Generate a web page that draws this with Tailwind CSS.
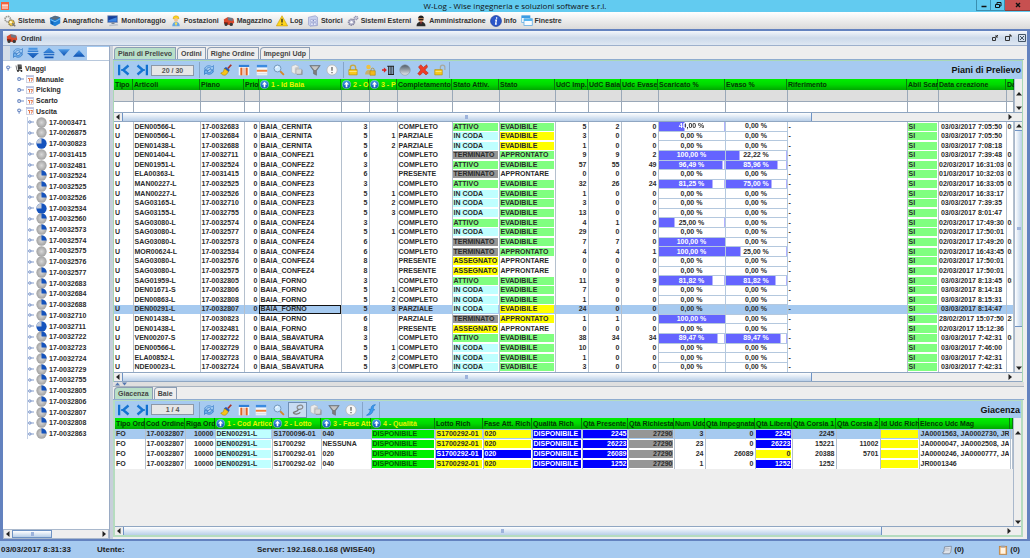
<!DOCTYPE html>
<html lang="it">
<head>
<meta charset="utf-8">
<title>W-Log</title>
<script src="https://cdn.jsdelivr.net/npm/@tailwindcss/browser@4"></script>
</head>
<body class="flex h-screen flex-col overflow-hidden bg-[#eeeeee] font-['Liberation_Sans',sans-serif] text-[7px] leading-[9px] font-bold text-[#2b2b2b]">

<svg class="absolute size-0" aria-hidden="true">
  <defs>
    <linearGradient id="gBlue" x1="0" y1="0" x2="0" y2="1"><stop offset="0" stop-color="#4a9ae8"/><stop offset="1" stop-color="#0b4fb0"/></linearGradient>
    <linearGradient id="gGrey" x1="0" y1="0" x2="0" y2="1"><stop offset="0" stop-color="#4d5a66"/><stop offset="1" stop-color="#e3e8ee"/></linearGradient>
    <radialGradient id="gBall"><stop offset="0" stop-color="#d8d8d8"/><stop offset="1" stop-color="#a2a2a2"/></radialGradient>
  </defs>
  <symbol id="gears" viewBox="0 0 16 16"><circle cx="5" cy="5.500" r="3.600" fill="none" stroke="#9a9a94" stroke-width="2.200" stroke-dasharray="2 .8"/><circle cx="10" cy="10.500" r="3.800" fill="#eec23c" stroke="#8a7c50" stroke-width="1.500" stroke-dasharray="2 .8"/><circle cx="9" cy="9.500" r="1.600" fill="#fff8d8"/><path d="M11 11l4 4" stroke="#777" stroke-width="2"/></symbol>
  <symbol id="books" viewBox="0 0 16 16"><path d="M1 4l7-3 7 2v8l-7 4-6-3z" fill="#1d7fd6"/><path d="M1 4l7-3 7 2-7 4z" fill="#5d6c7c"/><path d="M2 6l6 3 7-4" stroke="#8fd0ff" fill="none"/><path d="M3 8v4M5 9v4" stroke="#0b4c98"/></symbol>
  <symbol id="monitor" viewBox="0 0 16 16"><rect x="1" y="1" width="13" height="9" fill="#163f9a" stroke="#8a9bb8"/><path d="M2 7l11-4v6H2z" fill="#3d83e0"/><path d="M3 13l11-1 1 2-12 1z" fill="#b8c0cc"/><path d="M6 10h4v2H6z" fill="#7d8796"/></symbol>
  <symbol id="worker" viewBox="0 0 16 16"><path d="M4 5a4 4 0 018 0z" fill="#ffd21e" stroke="#c99700" stroke-width=".6"/><circle cx="8" cy="6.500" r="2.600" fill="#f3c48c"/><path d="M3 15c0-4 2-6 5-6s5 2 5 6z" fill="#62a7e6"/><path d="M6 10l2 5 2-5z" fill="#ffe14a"/></symbol>
  <symbol id="forklift" viewBox="0 0 16 16"><path d="M1 6l5-3 8 2 1 5-4 4-9-2z" fill="#d9482b"/><path d="M6 3l7 1v4l-6-1z" fill="#6d7684"/><path d="M1 9l6 1v3l-5-1z" fill="#8c2413"/><circle cx="4" cy="12.500" r="2" fill="#3a3a3a"/><circle cx="11" cy="12.500" r="2.200" fill="#3a3a3a"/></symbol>
  <symbol id="warn" viewBox="0 0 16 16"><path d="M8 1l7.500 13.500H.5z" fill="#ffd51c" stroke="#c79a00" stroke-width=".8"/><path d="M8 5v5M8 11.500v1.500" stroke="#222" stroke-width="1.700"/></symbol>
  <symbol id="cabinet" viewBox="0 0 16 16"><path d="M2 3l9-2 3 2v11l-10 1-2-2z" fill="#c7cfee" stroke="#8b94c4" stroke-width=".8"/><path d="M5 6h7v3H5zM5 10.500h7V14H5z" fill="#eef1ff" stroke="#8b94c4" stroke-width=".7"/><path d="M7.500 7.500h2M7.500 12h2" stroke="#4757a8"/></symbol>
  <symbol id="cogs" viewBox="0 0 16 16"><circle cx="6" cy="9.500" r="4" fill="#b6b6cf" stroke="#85859f" stroke-width="2" stroke-dasharray="1.800 1"/><circle cx="6" cy="9.500" r="1.600" fill="#fff"/><circle cx="12" cy="4" r="2.400" fill="#c6c6da" stroke="#8b8ba6" stroke-width="1.500" stroke-dasharray="1.400 .8"/></symbol>
  <symbol id="admin" viewBox="0 0 16 16"><path d="M2 15c0-4 2-6 6-6s6 2 6 6z" fill="#2a2a2a"/><circle cx="8" cy="5.500" r="3.500" fill="#b67a4e"/><path d="M4 5c0-6 8-6 8 0l-1-1H5z" fill="#222"/><path d="M5 5.500h6v1.300H5z" fill="#111"/><path d="M7 9h2l-1 4z" fill="#c33"/></symbol>
  <symbol id="info" viewBox="0 0 16 16"><circle cx="8" cy="8" r="7.300" fill="#2b56c9" stroke="#15348f" stroke-width=".8"/><path d="M8.800 3v2M7 7h1.500l-1 5H9" stroke="#fff" stroke-width="1.700" fill="none"/></symbol>
  <symbol id="windows" viewBox="0 0 16 16"><rect x="1" y="1" width="11" height="9" fill="#fff" stroke="#5aa9e2"/><path d="M1 1h11v3H1z" fill="#3d9be2"/><rect x="4" y="5" width="11" height="9" fill="#f7fbff" stroke="#5aa9e2"/><path d="M4 5h11v3H4z" fill="#56b4f0"/></symbol>
  <symbol id="refresh" viewBox="0 0 16 16"><path d="M2 7c1-5 7-6 10-3l2-2v5.500H8.500L10.500 5.500C8 3.500 5 5 4.500 7.500z" fill="#9cc8f2" stroke="#3a7fc8" stroke-width=".9"/><path d="M14 9c-1 5-7 6-10 3l-2 2V8.500h5.500L5.500 10.500c2.500 2 5.500.5 6-2z" fill="#6fb0ec" stroke="#2a72c0" stroke-width=".9"/></symbol>
  <symbol id="first" viewBox="0 0 16 16"><path d="M1.500 1v14" stroke="#0f6fce" stroke-width="3"/><path d="M14 2L7 8l7 6" fill="none" stroke="#1674d2" stroke-width="3.200"/><path d="M4 8h5" stroke="#1674d2" stroke-width="2"/></symbol>
  <symbol id="last" viewBox="0 0 16 16"><path d="M14.500 1v14" stroke="#0f6fce" stroke-width="3"/><path d="M2 2l7 6-7 6" fill="none" stroke="#1674d2" stroke-width="3.200"/><path d="M7 8h5" stroke="#1674d2" stroke-width="2"/></symbol>
  <symbol id="broom" viewBox="0 0 16 16"><path d="M15 1l-4.500 5" stroke="#a8352a" stroke-width="2.400"/><path d="M8 4l5 4-2 3-6-5z" fill="#2456b8"/><path d="M6 6l5 4c-1 3-3 5-5 5-2 0-4-1-5-3 3 0 4-3 5-6z" fill="#f6c31a" stroke="#a87c00" stroke-width=".7"/></symbol>
  <symbol id="cols" viewBox="0 0 16 16"><rect x="1" y="1" width="14" height="14" fill="#f4f6fa"/><path d="M1 1h14v3H1z" fill="#2f7fd8"/><path d="M4.500 5v10M11.500 5v10" stroke="#f0803c" stroke-width="3"/><path d="M4.500 5v10M11.500 5v10M8 5v10" stroke="#c8401c" stroke-width=".7"/></symbol>
  <symbol id="rows" viewBox="0 0 16 16"><rect x="1" y="1" width="14" height="14" fill="#f4f6fa"/><path d="M1 1h14v3.500H1z" fill="#3c8be0"/><path d="M1 9h14" stroke="#f0803c" stroke-width="2.600"/><path d="M1 13h14" stroke="#ccd3de"/></symbol>
  <symbol id="lens" viewBox="0 0 16 16"><path d="M9.500 9.500l5 5" stroke="#d58a2c" stroke-width="2.600"/><circle cx="6" cy="6" r="4.600" fill="#cfeaff" stroke="#7396b8" stroke-width="1.300"/><path d="M3.500 5.500a3 3 0 013-2" stroke="#fff" stroke-width="1.300" fill="none"/></symbol>
  <symbol id="boxes" viewBox="0 0 16 16"><path d="M1 3l5-2 4 2v8l-5 2-4-2z" fill="#ececec" stroke="#b0b0b0" stroke-width=".6"/><path d="M5 5l5-2v8l-5 2z" fill="#c9c9c9"/><path d="M7 7h7l1 1v6H8l-1-1z" fill="#a3a3a3" stroke="#808080" stroke-width=".6"/><path d="M7 7h7l-1 6H7z" fill="#d8d8d8"/></symbol>
  <symbol id="funnel" viewBox="0 0 16 16"><path d="M1 2h14L10 9v6l-4-2V9z" fill="#7d7d7d" stroke="#5c5c5c" stroke-width=".6"/><path d="M3 3h10L9 8H7z" fill="#c6c6c6"/></symbol>
  <symbol id="alert" viewBox="0 0 16 16"><circle cx="8" cy="8" r="6.800" fill="#f8f8f8" stroke="#b4b4b4"/><path d="M8 4v5M8 10.500v1.700" stroke="#555" stroke-width="1.600"/></symbol>
  <symbol id="lock" viewBox="0 0 16 16"><path d="M4.500 8V5a3.500 3.500 0 017 0v3" fill="none" stroke="#c9a83c" stroke-width="1.800"/><path d="M2.500 7.500h11v7h-11z" fill="#f8c91c" stroke="#b98a00" stroke-width=".8"/><path d="M3 10h10" stroke="#ffeb94"/></symbol>
  <symbol id="unlock" viewBox="0 0 16 16"><path d="M8.500 8V4.500a3 3 0 016 0V8" fill="none" stroke="#a7a9a0" stroke-width="1.600"/><path d="M1 7.500h10v7H1z" fill="#f8c91c" stroke="#b98a00" stroke-width=".8"/><path d="M2 10h8" stroke="#ffeb94"/></symbol>
  <symbol id="userlock" viewBox="0 0 16 16"><circle cx="6" cy="4" r="3" fill="#f0c040"/><path d="M1.500 14c0-4 2-6 5-6s4 2 4 6z" fill="#c9b26a"/><path d="M8 9h7v6H8z" fill="#f2b91c" stroke="#a87c00" stroke-width=".7"/><path d="M9.500 9V7.500a2 2 0 014 0V9" fill="none" stroke="#b08a20"/></symbol>
  <symbol id="import" viewBox="0 0 16 16"><path d="M0 8h3" stroke="#d22" stroke-width="2"/><path d="M2.500 4.500L6.500 8l-4 3.500z" fill="#d22"/><path d="M7 3h9M9 3v11M12 3v11M15 3v11M8 14h8" stroke="#222" stroke-width="1.500"/></symbol>
  <symbol id="ball" viewBox="0 0 16 16"><circle cx="8" cy="8" r="7" fill="url(#gGrey)" stroke="#8a949e" stroke-width=".8"/></symbol>
  <symbol id="cross" viewBox="0 0 16 16"><path d="M2 4l3-3 3.500 3.500L13 1l1 3-3.500 4L15 12l-3 2.500L8 11l-4 4-3-2 4-5z" fill="#ee3c26" stroke="#b81c0c" stroke-width=".7"/></symbol>
  <symbol id="chain" viewBox="0 0 16 16"><rect x="7" y="2" width="7.500" height="5" rx="2.500" fill="none" stroke="#8a8a8a" stroke-width="1.600" transform="rotate(-15 10 5)"/><path d="M9 7c-2 4-8 3-7 5s7 2 9-1" fill="none" stroke="#777" stroke-width="1.700"/></symbol>
  <symbol id="feather" viewBox="0 0 16 16"><path d="M14 1C9 1 8 4 8 7H5l2 2c-1 3-3 5-5 6 5 0 8-2 9-7h2l-2-2c0-2 1-4 3-5z" fill="#3d9cf0" stroke="#1767bd" stroke-width=".7"/></symbol>
  <symbol id="up" viewBox="0 0 16 16"><circle cx="8" cy="8" r="7.300" fill="url(#gBlue)" stroke="#bcd8f8" stroke-width=".8"/><path d="M8 3l4.500 5H9.500v5h-3V8h-3z" fill="#fff"/></symbol>
  <symbol id="ddown" viewBox="0 0 16 16"><path d="M2 1h12v2.500H2zM1 4.500h14v2H1zM0 8h16l-8 7z" fill="url(#gBlue)"/></symbol>
  <symbol id="dup" viewBox="0 0 16 16"><path d="M8 1l8 7H0zM1 9h14v2H1zM2 12.500h12V15H2z" fill="url(#gBlue)"/></symbol>
  <symbol id="sdown" viewBox="0 0 16 16"><path d="M0 3h16l-8 9z" fill="url(#gBlue)"/></symbol>
  <symbol id="sup" viewBox="0 0 16 16"><path d="M8 4l8 9H0z" fill="url(#gBlue)"/></symbol>
  <symbol id="handle" viewBox="0 0 10 8"><circle cx="3" cy="4" r="2" fill="#fff" stroke="#6382bf" stroke-width="1.500"/><path d="M5 4h5" stroke="#6382bf" stroke-width="1.300"/></symbol>
  <symbol id="handleOpen" viewBox="0 0 10 8"><path d="M3 5v3" stroke="#6382bf" stroke-width="1.300"/><circle cx="3" cy="3" r="2" fill="#fff" stroke="#6382bf" stroke-width="1.500"/><path d="M5 3h3" stroke="#a9bcdc"/></symbol>
  <symbol id="trolley" viewBox="0 0 16 16"><path d="M5 1h8l1 9-8 2z" fill="#3c3c3c"/><path d="M2 3l2 10h10" stroke="#555" stroke-width="1.600" fill="none"/><circle cx="6" cy="14" r="1.800" fill="#222"/><circle cx="13" cy="14" r="1.800" fill="#222"/><path d="M7 4h5" stroke="#aaa"/></symbol>
  <symbol id="cal" viewBox="0 0 16 16"><rect x="1" y="1" width="14" height="14" fill="#fbfbff" stroke="#a2a8c4"/><path d="M1 1h14v3H1z" fill="#b9c2e4"/><path d="M4 7h3v6M9 7h4l-2 6" fill="none" stroke="#e0622c" stroke-width="1.800"/></symbol>
  <symbol id="pie0" viewBox="0 0 16 16"><circle cx="8" cy="8" r="7.500" fill="url(#gBall)"/></symbol>
  <symbol id="pie1" viewBox="0 0 16 16"><circle cx="8" cy="8" r="7.500" fill="url(#gBall)"/><path d="M8 8V.5A7.500 7.500 0 0115.500 8z" fill="#1553bd"/></symbol>
  <symbol id="pie3" viewBox="0 0 16 16"><circle cx="8" cy="8" r="7.500" fill="#1553bd"/><path d="M8 8V.5A7.500 7.500 0 00.5 8z" fill="#c4cad6"/></symbol>
  <symbol id="notes" viewBox="0 0 16 16"><path d="M4 3l11-1-1 9-2 3H2l-1-2 2-1z" fill="#dfe3ea" stroke="#5f6673" stroke-width=".9"/><path d="M5 5.500h7M5 8h7" stroke="#a9aeb8"/></symbol>
  <symbol id="clip" viewBox="0 0 16 16"><rect x="2" y="2" width="12" height="13" fill="#e8a45a" stroke="#b97a32"/><rect x="4" y="4" width="8" height="10" fill="#fff4e4"/><path d="M5 1h6v3H5z" fill="#9aa2ae"/></symbol>
  <symbol id="tl" viewBox="0 0 8 8"><path d="M5.500 1v6L2 4z" fill="#222"/></symbol>
  <symbol id="tr" viewBox="0 0 8 8"><path d="M2.500 1v6L6 4z" fill="#222"/></symbol>
  <symbol id="tu" viewBox="0 0 8 8"><path d="M1 5.500h6L4 2z" fill="#222"/></symbol>
  <symbol id="td" viewBox="0 0 8 8"><path d="M1 2.500h6L4 6z" fill="#222"/></symbol>
</svg>

<header class="grid h-3 shrink-0 grid-cols-[1fr_auto_1fr] items-center bg-[#62cbf0]">
  <svg class="ml-px size-2 bg-[#f0643c]" viewBox="0 0 8 8" aria-hidden="true"><path d="M1 3h6M2 3v4M4 3v4M6 3v4" stroke="#fff" fill="none"/></svg>
  <h1 class="font-['Open_Sans','Noto_Sans',sans-serif] text-[8px] leading-[12px] font-normal text-[#111]">W-Log - Wise ingegneria e soluzioni software s.r.l.</h1>
  <div class="flex self-start justify-self-end">
    <button aria-label="Riduci a icona" class="flex h-[11px] w-[15px] items-center justify-center border border-t-0 border-[#3a8fb0]"><svg class="size-2" viewBox="0 0 8 8"><path d="M1.500 5.500h5" stroke="#111" stroke-width="1.500"/></svg></button>
    <button aria-label="Ripristina" class="flex h-[11px] w-[14px] items-center justify-center border-r border-b border-[#3a8fb0]"><svg class="size-2" viewBox="0 0 8 8"><path d="M1.500 3.500h4v3h-4zM3 3V1.500h4v3.500H5.500" fill="none" stroke="#111"/></svg></button>
    <button aria-label="Chiudi" class="flex h-[11px] w-[25px] items-center justify-center border-b border-[#8f3d38] bg-[#c75050]"><svg class="size-2" viewBox="0 0 8 8"><path d="M2 2l4 4M6 2L2 6" stroke="#111" stroke-width="1.400"/></svg></button>
  </div>
</header>

<nav id="menu" aria-label="Menu principale" class="flex h-[17px] shrink-0 items-center gap-1 bg-linear-to-b from-white to-[#dadada] pl-1 text-[#333]"></nav>

<main class="flex min-h-0 flex-1 flex-col border-x-[3px] border-y-2 border-[#6382bf] bg-[#eeeeee]">
  <div class="flex h-[15px] shrink-0 items-center gap-[3px] border-b border-[#9db0cc] bg-linear-to-b from-[#f3f6fb] via-[#ccd9ea] to-[#dfe8f3] pr-px pl-[3px]">
    <svg class="size-3" aria-hidden="true"><use href="#forklift"/></svg>
    <h2 class="flex-1 text-[#333]">Ordini</h2>
    <button aria-label="Riduci"><svg class="mr-[2px] size-2" viewBox="0 0 8 8"><path d="M1.500 3.500h3v3h-3zM5 3l2-2M5 1v2h2" fill="none" stroke="#333"/></svg></button>
    <button aria-label="Ingrandisci"><svg class="mr-[3px] size-2" viewBox="0 0 8 8"><path d="M1.500 2.500h4v4h-4zM5 3l2-2M5 1h2v2" fill="none" stroke="#333"/></svg></button>
    <button aria-label="Chiudi scheda"><svg class="size-2" viewBox="0 0 8 8"><path d="M.5.500h7v7h-7zM2 2l4 4M6 2L2 6" fill="none" stroke="#456"/></svg></button>
  </div>

  <div class="flex min-h-0 flex-1">
    <aside class="flex w-[107px] shrink-0 flex-col border-r border-[#9aabc4] bg-white">
      <div class="flex h-[15px] shrink-0 items-center border-b border-[#b8c8dc] bg-[#a6caf0]">
        <span class="h-full w-[7px] bg-[#d5dde8]"></span>
        <div id="treebar" class="flex flex-1 items-center"></div>
        <input aria-label="Cerca" class="h-[13px] w-[22px] bg-white outline-none">
      </div>
      <ul id="tree" class="mt-[2px] grid h-[376px] shrink-0 auto-rows-fr content-stretch"></ul>
      <div class="flex-1"></div>
      <div class="flex h-[10px] shrink-0 border border-[#a9b8cc] bg-[#eeeeee]">
        <button aria-label="Scorri a sinistra"><svg class="size-2"><use href="#tl"/></svg></button>
        <div class="flex-1"><div class="flex h-full w-[40px] items-center justify-center border border-[#6f93c4] bg-linear-to-b from-white to-[#b9cfe8]"><span class="h-1 w-[3px] bg-[#9db3dc]"></span></div></div>
        <button aria-label="Scorri a destra"><svg class="size-2"><use href="#tr"/></svg></button>
      </div>
    </aside>
    <div class="w-[3px] shrink-0 bg-[#c7cfda]"></div>

    <div class="flex min-w-0 flex-1 flex-col">
      <section class="flex shrink-0 flex-col">
        <div id="tabs1" role="tablist" class="flex h-[14px] items-end gap-px border-b border-[#8faccf] pl-px"></div>
        <div class="mr-px border-x border-t border-[#a9d8b4]">
          <div class="flex h-[18px] items-center bg-[#a6caf0]">
            <button aria-label="Primo" class="flex w-[19px] justify-center"><svg class="size-3"><use href="#first"/></svg></button>
            <button aria-label="Ultimo" class="flex w-[18px] justify-center"><svg class="size-3"><use href="#last"/></svg></button>
            <input aria-label="Posizione" value="20 / 30" class="h-[11px] w-[43px] border border-[#8c98a8] bg-[#e6e6e6] text-center font-bold text-[#555]">
            <div id="bar1" class="ml-[5px] flex h-4 w-[142px] items-center border-l border-[#86a5c8]"></div>
            <div id="bar2" class="ml-[2px] flex h-4 w-[107px] items-center border-x border-[#86a5c8]"></div>
            <h3 class="flex-1 pr-px text-right text-[9px] leading-3 text-[#111]">Piani di Prelievo</h3>
          </div>
          <div class="flex">
            <div class="min-w-0 flex-1 overflow-hidden">
              <table class="w-full table-fixed border-collapse"><thead id="head1"></thead><tbody id="filter1"></tbody></table>
            </div>
            <div class="flex w-2 shrink-0 flex-col border-l border-[#a9b8cc] bg-[#eeeeee]">
              <span class="h-[11px]"></span>
              <button aria-label="Filtri precedenti"><svg class="size-2"><use href="#tu"/></svg></button>
              <span class="flex-1"></span>
              <button aria-label="Filtri successivi"><svg class="size-2"><use href="#td"/></svg></button>
            </div>
          </div>
          <div class="flex h-[10px] border-y border-[#8fa6c2] bg-[#eeeeee] pr-2">
            <button aria-label="Colonne precedenti"><svg class="size-2"><use href="#tl"/></svg></button>
            <div class="flex-1"><div class="flex h-full w-[78%] items-center justify-center border-x border-[#6f93c4] bg-linear-to-b from-white to-[#b9cfe8]"><span class="h-1 w-[3px] bg-[#9db3dc]"></span></div></div>
            <button aria-label="Colonne successive"><svg class="size-2"><use href="#tr"/></svg></button>
          </div>
          <div class="flex h-[250px] overflow-hidden bg-white">
            <div class="h-[251px] min-w-0 flex-1 overflow-hidden">
              <table aria-label="Piani di Prelievo" class="h-full w-full table-fixed border-collapse"><colgroup id="colg1"></colgroup><tbody id="body1"></tbody></table>
            </div>
            <div class="flex w-2 shrink-0 flex-col border-l border-[#a9b8cc] bg-[#eeeeee]">
              <button aria-label="Righe precedenti"><svg class="size-2"><use href="#tu"/></svg></button>
              <div class="flex-1"><div class="flex h-[84%] w-full items-center justify-center border-y border-[#6f93c4] bg-linear-to-r from-white to-[#b9cfe8]"><span class="h-[3px] w-1 bg-[#9db3dc]"></span></div></div>
              <button aria-label="Righe successive"><svg class="size-2"><use href="#td"/></svg></button>
            </div>
          </div>
          <div class="flex h-[10px] border-y border-[#8fa6c2] bg-[#eeeeee] pr-2">
            <button aria-label="Scorri tabella a sinistra"><svg class="size-2"><use href="#tl"/></svg></button>
            <div class="flex-1"><div class="flex h-full w-[78%] items-center justify-center border-x border-[#6f93c4] bg-linear-to-b from-white to-[#b9cfe8]"><span class="h-1 w-[3px] bg-[#9db3dc]"></span></div></div>
            <button aria-label="Scorri tabella a destra"><svg class="size-2"><use href="#tr"/></svg></button>
          </div>
        </div>
      </section>

      <div class="flex h-[5px] shrink-0 items-center gap-[2px] border-b border-[#aab4c0] bg-[#dfdfdf] pl-[2px]">
        <svg class="h-1 w-[5px]" viewBox="0 0 8 8" preserveAspectRatio="none"><path d="M0 7h8L4 1z" fill="#5578b0"/></svg>
        <svg class="h-1 w-[5px]" viewBox="0 0 8 8" preserveAspectRatio="none"><path d="M0 1h8L4 7z" fill="#5578b0"/></svg>
      </div>

      <section class="flex min-h-0 flex-1 flex-col">
        <div id="tabs2" role="tablist" class="flex h-[13px] shrink-0 items-end gap-px border-b border-[#8faccf] pl-px"></div>
        <div class="mr-px mb-[2px] flex min-h-0 flex-1 flex-col border-2 border-t border-[#b5dcbf]">
          <div class="flex h-[17px] shrink-0 items-center bg-[#a6caf0]">
            <button aria-label="Primo in giacenza" class="flex w-[18px] justify-center"><svg class="size-3"><use href="#first"/></svg></button>
            <button aria-label="Ultimo in giacenza" class="flex w-[18px] justify-center"><svg class="size-3"><use href="#last"/></svg></button>
            <input aria-label="Posizione giacenza" value="1 / 4" class="h-[11px] w-[43px] border border-[#8c98a8] bg-[#e6e6e6] text-center font-bold text-[#555]">
            <div id="bar3" class="ml-[5px] flex h-4 w-[161px] items-center border-l border-[#86a5c8]"></div>
            <div id="bar4" class="ml-[2px] flex h-4 w-[18px] items-center border-x border-[#86a5c8]"></div>
            <h3 class="flex-1 pr-px text-right text-[9px] leading-3 text-[#111]">Giacenza</h3>
          </div>
          <div class="flex min-h-0 flex-1">
            <div class="min-w-0 flex-1 overflow-hidden">
              <table aria-label="Giacenza" class="w-full table-fixed border-collapse"><thead id="head2"></thead><tbody id="body2"></tbody></table>
            </div>
            <div class="flex w-2 shrink-0 flex-col border-l border-[#a9b8cc] bg-[#eeeeee]">
              <span class="h-[11px]"></span>
              <button aria-label="Giacenze precedenti"><svg class="size-2"><use href="#tu"/></svg></button>
              <span class="flex-1"></span>
              <button aria-label="Giacenze successive"><svg class="size-2"><use href="#td"/></svg></button>
            </div>
          </div>
          <div class="flex h-[9px] shrink-0 border-t border-[#8fa6c2] bg-[#eeeeee] pr-2">
            <button aria-label="Scorri giacenza a sinistra"><svg class="size-2"><use href="#tl"/></svg></button>
            <div class="flex-1"><div class="flex h-full w-[86%] items-center justify-center border-x border-[#6f93c4] bg-linear-to-b from-white to-[#b9cfe8]"><span class="h-1 w-[3px] bg-[#9db3dc]"></span></div></div>
            <button aria-label="Scorri giacenza a destra"><svg class="size-2"><use href="#tr"/></svg></button>
          </div>
        </div>
      </section>
    </div>
    <div class="w-[3px] shrink-0"></div>
  </div>
</main>

<footer class="flex h-[17px] shrink-0 items-center bg-[#a6caf0] pr-[10px] pl-px text-[8px] text-[#222]">
  <span class="w-24">03/03/2017 8:31:33</span>
  <span class="w-40">Utente:</span>
  <span class="flex-1">Server: 192.168.0.168 (WISE40)</span>
  <span class="flex w-14 items-center gap-[2px]"><svg class="size-[10px]" aria-hidden="true"><use href="#notes"/></svg>(0)</span>
  <span class="flex items-center gap-[2px]"><svg class="size-[10px]" aria-hidden="true"><use href="#clip"/></svg>(0)</span>
</footer>

<script>
const $ = id => document.getElementById(id);
const icon = (name, cls) => `<svg class="${cls} shrink-0" aria-hidden="true"><use href="#${name}"/></svg>`;

// Main menu
$('menu').innerHTML = [['gears','Sistema'],['books','Anagrafiche'],['monitor','Monitoraggio'],['worker','Postazioni'],['forklift','Magazzino'],['warn','Log'],['cabinet','Storici'],['cogs','Sistemi Esterni'],['admin','Amministrazione'],['info','Info'],['windows','Finestre']]
  .map(([i, t]) => `<button class="flex items-center gap-[2px] whitespace-nowrap">${icon(i, 'size-3')}${t}</button>`).join('');

// Toolbars
const bar = (id, items) => $(id).innerHTML = items.map(([i, t, on]) =>
  `<button aria-label="${t}" class="flex h-4 flex-1 items-center justify-center ${on ? 'border border-[#6f8fb4] bg-[#c8dcf2]' : ''}">${icon(i, 'size-3')}</button>`).join('');
bar('treebar', [['refresh','Aggiorna albero'],['ddown','Espandi tutto'],['dup','Comprimi tutto'],['sdown','Espandi'],['sup','Comprimi']]);
const common = [['refresh','Aggiorna'],['broom','Pulisci'],['cols','Colonne'],['rows','Righe'],['lens','Cerca']];
bar('bar1', [...common, ['boxes','Colli'],['funnel','Filtro'],['alert','Avvisi']]);
bar('bar2', [['lock','Blocca'],['userlock','Assegna'],['import','Importa'],['ball','Stato'],['cross','Elimina'],['unlock','Sblocca']]);
bar('bar3', [...common, ['chain','Collega', 1],['boxes','Colli'],['funnel','Filtro'],['alert','Avvisi']]);
bar('bar4', [['feather','Modifica']]);

// Tabs
const tabs = (id, names) => $(id).innerHTML = names.map((n, i) =>
  `<button role="tab" aria-selected="${i === 0}" class="h-[12px] rounded-tl-[4px] border border-b-0 border-[#8c9db4] px-[3px] whitespace-nowrap text-[#444] ${i === 0 ? 'bg-[#b8dfc8]' : 'bg-[#eeeeee]'}">${n}</button>`).join('');
tabs('tabs1', ['Piani di Prelievo', 'Ordini', 'Righe Ordine', 'Impegni Udp']);
tabs('tabs2', ['Giacenza', 'Baie']);

// Navigation tree
const leaves = '0003471:0 0026875:0 0030823:3 0031415:0 0032481:0 0032524:1 0032525:1 0032526:1 0032534:3 0032560:1 0032573:1 0032574:1 0032575:0 0032576:0 0032577:1 0032683:1 0032684:1 0032688:1 0032710:1 0032711:3 0032722:1 0032723:1 0032724:1 0032729:1 0032755:1 0032805:1 0032806:1 0032807:1 0032808:1 0032863:1'.split(' ');
$('tree').innerHTML =
  `<li class="flex items-center gap-[2px] pl-[3px]">${icon('handleOpen', 'h-1.5 w-[7px]')}${icon('trolley', 'size-2')}Viaggi</li>` +
  ['Manuale', 'Picking', 'Scarto', 'Uscita'].map(t => `<li class="flex items-center gap-[2px] pl-[14px]">${icon(t === 'Uscita' ? 'handleOpen' : 'handle', 'h-1.5 w-[7px]')}${icon('cal', 'size-2')}${t}</li>`).join('') +
  leaves.map(s => { const [n, p] = s.split(':');
    return `<li class="ml-6 flex min-h-0 items-center gap-[2px] border-l border-[#c3d0e6]">${icon('handle', 'h-1.5 w-[6px]')}${icon('pie' + p, 'size-[11px]')}17-${n}</li>`; }).join('');

// Grid headers
const widths1 = [19,67,44,15,82,28,28,55,47,56,33,33,37,67,62,120,31,68,0];
const heads1 = ['Tipo','Articoli','Piano','Prio','^1 - Id Baia','^2 - O','^3 - P','Completamento','Stato Attiv.','Stato','UdC Imp.','UdC Baia','Udc Evase','Scaricato %','Evaso %','Riferimento','Abil Scar','Data creazione','Da'];
const widths2 = [30,40,30,57,49,50,64,48,49,50,46,46,31,50,37,44,44,39,91,0];
const heads2 = ['Tipo Ord','Cod Ordine','Riga Ord','^1 - Cod Articolo','^2 - Lotto','^3 - Fase Att.','^4 - Qualità','Lotto Rich','Fase Att. Rich','Qualità Rich','Qtà Presente','Qtà Richiesta','Num Udc','Qtà Impegnata','Qtà Libera','Qtà Corsia 1','Qtà Corsia 2','Id Udc Rich','Elenco Udc Mag',''];
const w = n => n ? ` style="width:${n}px"` : '';
const head = (names, ws) => '<tr class="h-[11px]">' + names.map((t, i) => {
  const sorted = t[0] === '^';
  return `<th scope="col"${w(ws[i])} class="overflow-hidden bg-linear-to-b from-[#00ee00] via-[#00d800] to-[#00a800] p-0 text-left whitespace-nowrap shadow-[inset_-1px_0_#0a7a0a] ${sorted ? 'text-[#e8f400]' : 'text-[#043804]'}"><span class="flex items-center gap-[2px] overflow-hidden pl-px">${sorted ? icon('up', 'size-[9px]') + t.slice(1) : t}</span></th>`; }).join('') + '</tr>';
$('head1').innerHTML = head(heads1, widths1);
$('head2').innerHTML = head(heads2, widths2);
$('filter1').innerHTML = ['border-b border-[#9aa8b8] bg-[#dedede]', 'bg-white']
  .map(c => `<tr class="h-[11px] ${c}">` + widths1.map(() => '<td class="border-r border-[#9aa8b8] p-0"></td>').join('') + '</tr>').join('');
$('colg1').innerHTML = widths1.map(n => `<col${w(n)}>`).join('');

// Cells
const fills = { g: 'bg-[#80ff80]', c: 'bg-[#bfffff]', y: 'bg-[#ffff00]', k: 'bg-[#969696]', G: 'bg-[#00f000] text-[#045804]', b: 'bg-[#0000ff] text-white', n: '' };
const cell = (t, fill, align, extra) =>
  `<td class="overflow-hidden border-r border-[#b4c0ce] p-0 whitespace-nowrap ${align} ${extra || ''}"><span class="mr-px block h-2 overflow-hidden leading-[8px] ${align === 'text-left' ? 'pl-px' : ''} ${fills[fill]}">${t}</span></td>`;
const meter = v => {
  const p = parseFloat(v.replace(',', '.'));
  const split = p > 30 && p < 70;
  const barStyle = p ? ` style="background-image:linear-gradient(to right,#6464ff ${p}%,transparent ${p}%)"` : '';
  const txtStyle = split ? ` style="background-image:linear-gradient(to right,#ffffff ${p}%,#2b2b2b ${p}%)"` : '';
  return `<td${barStyle} class="border-r border-b border-[#b4c8de] p-0 text-center whitespace-nowrap ${p >= 70 ? 'text-white' : ''}"><span${txtStyle} class="block h-2 leading-[8px] ${split ? 'bg-clip-text text-transparent' : ''}">${v} %</span></td>`;
};

// Picking plans: article | plan | bay | c | p | completion | activation | state:colour | counts | percentages | date | next date
const plans = `DEN00566-L|32683|CERNITA|3||C|A|EVADIBILE:g|5|2|0|40,00|0,00|03/03/2017 7:05:50|03
DEN00566-L|32684|CERNITA|5|1|P|I|EVADIBILE:y|3|0|0|0,00|0,00|03/03/2017 7:05:50|
DEN01438-L|32688|CERNITA|5|2|P|I|EVADIBILE:y|1|0|0|0,00|0,00|03/03/2017 7:08:18|
DEN01404-L|32711|CONFEZ1|6||C|T|APPRONTATO:g|9|9|2|100,00|22,22|03/03/2017 7:39:48|03
DEN01951-L|32524|CONFEZ2|3||C|A|EVADIBILE:g|57|55|49|96,49|85,96|02/03/2017 16:31:03|02.
ELA00363-L|31415|CONFEZ2|6||S|T|APPRONTARE:n|0|0|0|0,00|0,00|01/03/2017 10:32:03|01.
MAN00227-L|32525|CONFEZ3|3||C|A|EVADIBILE:g|32|26|24|81,25|75,00|02/03/2017 16:33:05|02.
MAN00227-L|32526|CONFEZ3|5|1|C|I|EVADIBILE:g|1|0|0|0,00|0,00|02/03/2017 16:33:17|
SAG03165-L|32710|CONFEZ3|5|2|C|I|EVADIBILE:g|3|0|0|0,00|0,00|03/03/2017 7:39:35|
SAG03155-L|32755|CONFEZ3|5|3|C|I|EVADIBILE:g|13|0|0|0,00|0,00|03/03/2017 8:01:47|
SAG03080-L|32574|CONFEZ4|3||C|A|EVADIBILE:g|4|1|0|25,00|0,00|02/03/2017 17:49:30|02.
SAG03080-L|32577|CONFEZ4|5|1|C|I|EVADIBILE:g|29|0|0|0,00|0,00|02/03/2017 17:50:01|
SAG03080-L|32573|CONFEZ4|6||C|T|EVADIBILE:g|7|7|0|100,00|0,00|02/03/2017 17:49:20|02.
MOR00624-L|32534|CONFEZ4|6||C|T|APPRONTATO:g|4|4|1|100,00|25,00|02/03/2017 16:43:45|02.
SAG03080-L|32576|CONFEZ4|8||S|Z|APPRONTARE:n|0|0|0|0,00|0,00|02/03/2017 17:50:01|
SAG03080-L|32575|CONFEZ4|8||S|Z|APPRONTARE:n|0|0|0|0,00|0,00|02/03/2017 17:50:01|
SAG01959-L|32805|FORNO|3||C|A|EVADIBILE:g|11|9|9|81,82|81,82|03/03/2017 8:13:45|03
DEN01671-S|32806|FORNO|5|1|C|I|EVADIBILE:g|7|0|0|0,00|0,00|03/03/2017 8:14:18|
DEN00863-L|32808|FORNO|5|2|C|I|EVADIBILE:g|1|0|0|0,00|0,00|03/03/2017 8:15:31|
DEN00291-L|32807|FORNO|5|3|P|I|EVADIBILE:y|24|0|0|0,00|0,00|03/03/2017 8:14:47|
DEN01438-L|30823|FORNO|6||P|T|APPRONTATO:y|1|1|0|100,00|0,00|28/02/2017 15:07:50|28.
DEN01438-L|32481|FORNO|8||S|Z|APPRONTARE:n|0|0|0|0,00|0,00|02/03/2017 15:12:36|
VEN00207-S|32722|_|3||C|A|EVADIBILE:g|38|34|34|89,47|89,47|03/03/2017 7:42:31|03
DEN00566-L|32729|_|5|1|C|I|EVADIBILE:g|10|0|0|0,00|0,00|03/03/2017 7:46:00|
ELA00852-L|32723|_|5|2|C|I|EVADIBILE:g|1|0|0|0,00|0,00|03/03/2017 7:42:31|
NDE00023-L|32724|_|5|3|C|I|EVADIBILE:g|3|0|0|0,00|0,00|03/03/2017 7:42:31|`.split('\n').map(r => r.split('|'));
const completion = { C: 'COMPLETO', P: 'PARZIALE', S: 'PRESENTE' };
const activation = { A: ['ATTIVO', 'g'], I: ['IN CODA', 'c'], T: ['TERMINATO', 'k'], Z: ['ASSEGNATO', 'y'] };
const L = 'text-left', R = 'text-right', C = 'text-center';
$('body1').innerHTML = plans.map(r => {
  const sel = r[1] === '32807';
  const [st, sc] = r[7].split(':');
  return `<tr class="${sel ? 'bg-[#a6caf0]' : ''}">` + [
    cell('U', 'n', L), cell(r[0], 'n', L), cell('17-00' + r[1], 'n', L), cell('0', 'n', R),
    cell('BAIA_' + (r[2] === '_' ? 'SBAVATURA' : r[2]), 'n', L, sel ? 'outline outline-[#111] -outline-offset-1' : ''),
    cell(r[3], 'n', R), cell(r[4], 'n', R), cell(completion[r[5]], 'n', L),
    cell(activation[r[6]][0], activation[r[6]][1], L), cell(st, sc, L),
    cell(r[8], 'n', R), cell(r[9], 'n', R), cell(r[10], 'n', R), meter(r[11]), meter(r[12]),
    cell('-', 'n', L), cell('SI', 'g', L), cell(r[13], 'n', C), cell(r[14], 'n', L)].join('') + '</tr>';
}).join('');

// Stock rows
const stock = `S1700096-01|040|y|y|2245|3|0|2245:b|2245||JA0001563, JA0002730, JR00
S1700292|NESSUNA|y|y|26223|23|0|26223:b|15221|11002|JA0000047, JA0002508, JA00
S1700292-01|020|b|b|26089|24|26089|0:y|20388|5701|JA0000246, JA0000777, JA00
S1700292-02|040|y|y|1252|1|0|1252:b|1252||JR0001346`.split('\n').map(r => r.split('|'));
$('body2').innerHTML = stock.map((r, i) => {
  const [lib, lc] = r[7].split(':');
  return `<tr class="h-[10px] ${i ? 'bg-white' : 'bg-[#a6caf0]'}">` + [
    cell('FO', 'n', L), cell('17-0032807', 'n', L), cell('10000', 'n', R), cell('DEN00291-L', 'c', L),
    cell(r[0], 'n', L), cell(r[1], 'n', L), cell('DISPONIBILE', 'G', L), cell('S1700292-01', r[2], L), cell('020', r[3], L),
    cell('DISPONIBILE', 'b', L), cell(r[4], 'b', R), cell('27290', 'k', R), cell(r[5], 'n', R), cell(r[6], 'n', R),
    cell(lib, lc, R), cell(r[8], 'n', R), cell(r[9], 'n', R), cell('', 'y', L), cell(r[10], 'n', L), cell('', 'n', L)].join('') + '</tr>';
}).join('');
</script>
</body>
</html>
